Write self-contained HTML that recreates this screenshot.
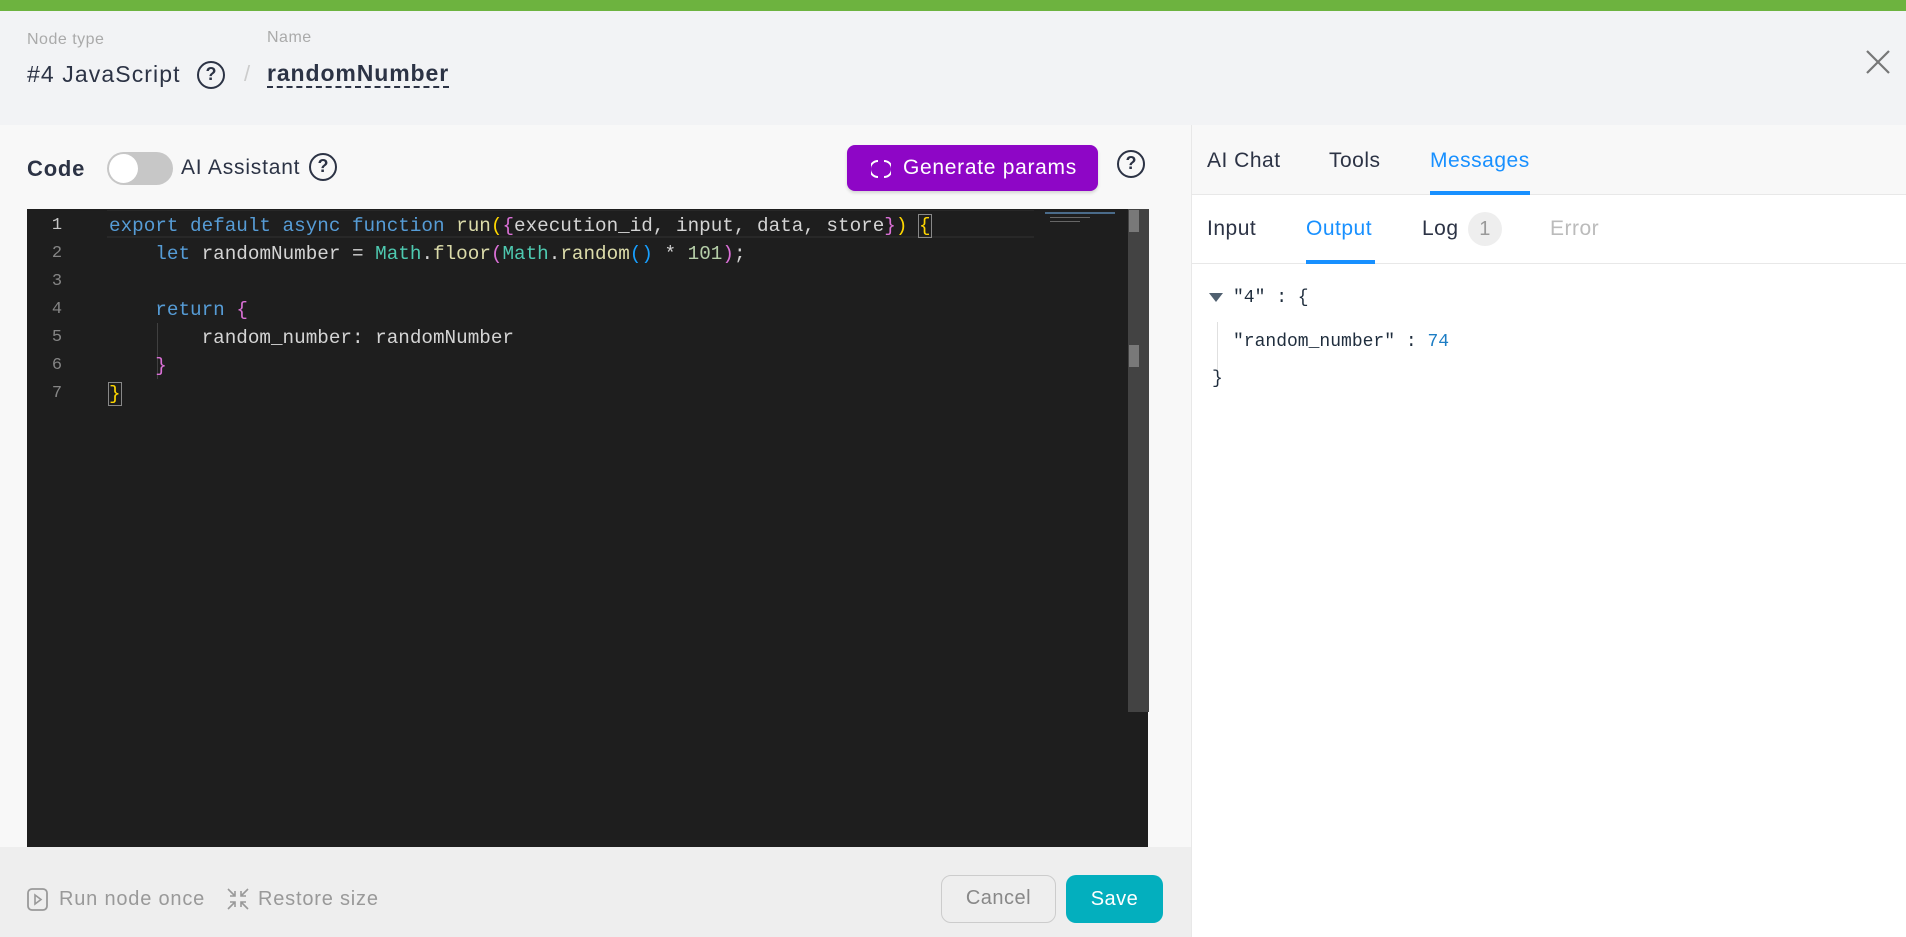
<!DOCTYPE html>
<html><head><meta charset="utf-8"><style>
*{margin:0;padding:0;box-sizing:border-box}
body{width:1906px;height:937px;overflow:hidden;background:#fff;font-family:"Liberation Sans",sans-serif;position:relative;color:#2c3345;letter-spacing:0.5px}
.a{position:absolute;white-space:nowrap}
.help{position:absolute;width:28px;height:28px;border:2.5px solid #2c3345;border-radius:50%;font-weight:bold;font-size:18px;text-align:center;line-height:23px;color:#2c3345;letter-spacing:0}
.code{font-family:"Liberation Mono",monospace;font-size:19.3px;color:#d4d4d4;letter-spacing:0}
.code div{white-space:pre;height:28px}
.ln{position:absolute;left:0;width:60px;text-align:center;color:#858585;font-family:"Liberation Mono",monospace;font-size:17px;letter-spacing:0}
.kw{color:#569cd6}.cl{color:#4ec9b0}.fn{color:#dcdcaa}.nm{color:#b5cea8}.y{color:#ffd700}.p{color:#da70d6}.b{color:#179fff}
.mono{font-family:"Liberation Mono",monospace;font-size:18px;color:#1f2d3d;letter-spacing:0}
</style></head><body>
<div class="a" style="left:0;top:0;width:1906px;height:11px;background:#6db33f"></div>
<div class="a" style="left:0;top:11px;width:1906px;height:114px;background:#f2f3f5"></div>
<div class="a" style="left:27px;top:31px;font-size:16px;color:#aaa">Node type</div>
<div class="a" style="left:267px;top:29px;font-size:16px;color:#aaa">Name</div>
<div class="a" style="left:27px;top:61px;font-size:23px;letter-spacing:1.1px;color:#2c3345">#4 JavaScript</div>
<div class="help" style="left:197px;top:61px">?</div>
<div class="a" style="left:244px;top:61px;font-size:22px;color:#ccc">/</div>
<div class="a" style="left:267px;top:60px;font-size:23px;letter-spacing:0.9px;font-weight:bold;color:#2c3345;border-bottom:2px dashed #2c3345;line-height:26px">randomNumber</div>
<svg class="a" style="left:1865px;top:49px" width="26" height="26"><path d="M2 2L24 24M24 2L2 24" stroke="#777" stroke-width="2.2"/></svg>

<div class="a" style="left:0;top:125px;width:1192px;height:812px;background:#f8f8f8"></div>
<div class="a" style="left:1191px;top:125px;width:1px;height:812px;background:#e8e8e8"></div>
<div class="a" style="left:27px;top:156px;font-size:22px;letter-spacing:0.8px;font-weight:bold;color:#2c3345">Code</div>
<div class="a" style="left:107px;top:152px;width:66px;height:33px;border-radius:17px;background:#c7c7c7"></div>
<div class="a" style="left:109px;top:154px;width:29px;height:29px;border-radius:50%;background:#fff"></div>
<div class="a" style="left:181px;top:156px;font-size:21px;letter-spacing:0.8px;color:#2c3345">AI Assistant</div>
<div class="help" style="left:309px;top:153px">?</div>
<div class="a" style="left:847px;top:145px;width:251px;height:46px;border-radius:8px;background:#8e06c6;box-shadow:0 2px 3px rgba(0,0,0,.15)"></div>
<svg class="a" style="left:871px;top:158px" width="20" height="22"><path d="M7 3A8 8 0 0 0 7 19M13 3A8 8 0 0 1 13 19" stroke="#fff" stroke-width="2" fill="none"/></svg>
<div class="a" style="left:903px;top:156px;font-size:21px;letter-spacing:0.7px;color:#fff">Generate params</div>
<div class="help" style="left:1117px;top:150px">?</div>

<div class="a" style="left:27px;top:209px;width:1121px;height:638px;background:#1e1e1e"></div>
<div class="a" style="left:107px;top:210px;width:927px;height:28px;border-top:1px solid #282828;border-bottom:2px solid #282828"></div>
<div class="a" style="left:1128px;top:209px;width:21px;height:503px;background:#434343"></div>
<div class="a" style="left:1129px;top:210px;width:10px;height:22px;background:#797979"></div>
<div class="a" style="left:1129px;top:345px;width:10px;height:22px;background:#797979"></div>
<div class="a" style="left:1045px;top:212px;width:70px;height:2px;background:#4a6b8a"></div>
<div class="a" style="left:1050px;top:217px;width:40px;height:1px;background:#666"></div>
<div class="a" style="left:1050px;top:221px;width:30px;height:1px;background:#666"></div>
<div class="a" style="left:157px;top:323px;width:1px;height:56px;background:#404040"></div>
<div style="position:absolute;left:27px;top:214px;">
<div class="ln" style="top:2px;color:#c6c6c6">1</div>
<div class="ln" style="top:30px">2</div>
<div class="ln" style="top:58px">3</div>
<div class="ln" style="top:86px">4</div>
<div class="ln" style="top:114px">5</div>
<div class="ln" style="top:142px">6</div>
<div class="ln" style="top:170px">7</div>
</div>
<div class="a code" style="left:109px;top:212px;line-height:28px"><div><span class="kw">export default async function</span> <span class="fn">run</span><span class="y">(</span><span class="p">{</span>execution_id, input, data, store<span class="p">}</span><span class="y">)</span> <span class="y" style="outline:1px solid #888">{</span></div><div>    <span class="kw">let</span> randomNumber = <span class="cl">Math</span>.<span class="fn">floor</span><span class="p">(</span><span class="cl">Math</span>.<span class="fn">random</span><span class="b">()</span> * <span class="nm">101</span><span class="p">)</span>;</div><div> </div><div>    <span class="kw">return</span> <span class="p">{</span></div><div>        random_number: randomNumber</div><div>    <span class="p">}</span></div><div><span class="y" style="outline:1px solid #888">}</span></div></div>

<div class="a" style="left:0;top:847px;width:1191px;height:90px;background:#eeeeee"></div>
<svg class="a" style="left:27px;top:888px" width="22" height="24"><rect x="1" y="1" width="19" height="21" rx="4" fill="none" stroke="#999" stroke-width="1.8"/><path d="M8 7L14 11.5L8 16Z" fill="none" stroke="#999" stroke-width="1.6"/></svg>
<div class="a" style="left:59px;top:888px;font-size:20px;letter-spacing:0.8px;color:#999">Run node once</div>
<svg class="a" style="left:225px;top:886px" width="26" height="26"><path d="M3 3L10 10M10 5V10H5M23 3L16 10M16 5V10H21M3 23L10 16M5 16H10V21M23 23L16 16M21 16H16V21" stroke="#999" stroke-width="1.6" fill="none"/></svg>
<div class="a" style="left:258px;top:888px;font-size:20px;letter-spacing:0.8px;color:#999">Restore size</div>
<div class="a" style="left:941px;top:875px;width:115px;height:48px;border:1.5px solid #ccc;border-radius:10px;font-size:20px;color:#888;text-align:center;line-height:45px">Cancel</div>
<div class="a" style="left:1066px;top:875px;width:97px;height:48px;background:#03afbe;border-radius:10px;font-size:20px;color:#fff;text-align:center;line-height:48px">Save</div>

<div class="a" style="left:1192px;top:125px;width:714px;height:70px;background:#f8f8f8;border-bottom:1px solid #e8e8e8"></div>
<div class="a" style="left:1207px;top:149px;font-size:21px;color:#2c3345">AI Chat</div>
<div class="a" style="left:1329px;top:149px;font-size:21px;color:#2c3345">Tools</div>
<div class="a" style="left:1430px;top:149px;font-size:21px;color:#1890ff">Messages</div>
<div class="a" style="left:1430px;top:191px;width:100px;height:4px;background:#1890ff"></div>
<div class="a" style="left:1207px;top:217px;font-size:21px;color:#2c3345">Input</div>
<div class="a" style="left:1306px;top:217px;font-size:21px;color:#1890ff">Output</div>
<div class="a" style="left:1422px;top:217px;font-size:21px;color:#2c3345">Log</div>
<div class="a" style="left:1468px;top:212px;width:34px;height:34px;border-radius:50%;background:#eee;color:#999;font-size:20px;text-align:center;line-height:34px">1</div>
<div class="a" style="left:1550px;top:217px;font-size:21px;color:#bbb">Error</div>
<div class="a" style="left:1192px;top:263px;width:714px;height:1px;background:#e8e8e8"></div>
<div class="a" style="left:1306px;top:260px;width:69px;height:4px;background:#1890ff"></div>
<svg class="a" style="left:1209px;top:293px" width="14" height="10"><path d="M0 0H14L7 9Z" fill="#506070"/></svg>
<div class="a mono" style="left:1233px;top:288px">"4" : {</div>
<div class="a" style="left:1217px;top:322px;width:1px;height:48px;background:#e0e0e0"></div>
<div class="a mono" style="left:1233px;top:332px">"random_number" : <span style="color:#1d7dc4">74</span></div>
<div class="a mono" style="left:1212px;top:369px">}</div>
</body></html>
